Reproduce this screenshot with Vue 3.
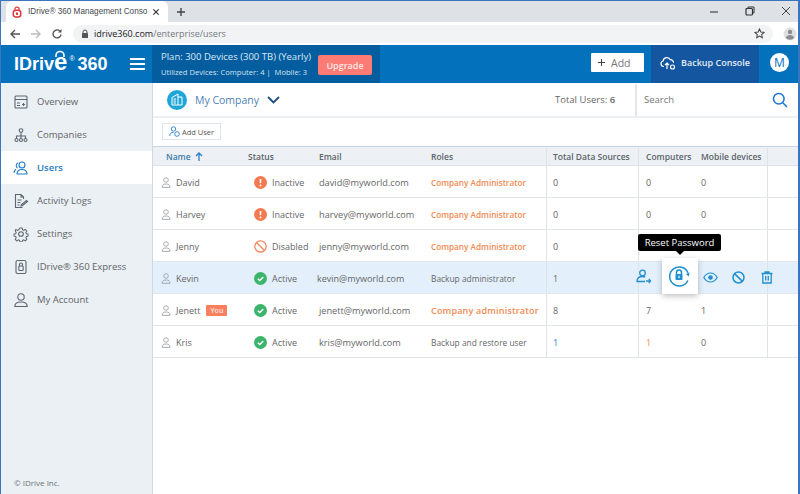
<script setup>
const navItems = [
  { label: 'Overview', icon: 'overview' },
  { label: 'Companies', icon: 'companies' },
  { label: 'Users', icon: 'users', active: true },
  { label: 'Activity Logs', icon: 'logs' },
  { label: 'Settings', icon: 'settings' },
  { label: 'IDrive® 360 Express', icon: 'express' },
  { label: 'My Account', icon: 'account' },
]

// jenny's device counts sit under the tooltip, so they are left empty
const users = [
  { name: 'David', status: 'Inactive', email: 'david@myworld.com', role: 'Company Administrator', admin: true, total: '0', computers: '0', mobile: '0' },
  { name: 'Harvey', status: 'Inactive', email: 'harvey@myworld.com', role: 'Company Administrator', admin: true, total: '0', computers: '0', mobile: '0' },
  { name: 'Jenny', status: 'Disabled', email: 'jenny@myworld.com', role: 'Company Administrator', admin: true, total: '0', computers: '', mobile: '' },
  { name: 'Kevin', status: 'Active', email: 'kevin@myworld.com', role: 'Backup administrator', total: '1', computers: '', mobile: '', hover: true },
  { name: 'Jenett', status: 'Active', email: 'jenett@myworld.com', role: 'Company administrator', admin: true, strong: true, you: true, total: '8', computers: '7', mobile: '1' },
  { name: 'Kris', status: 'Active', email: 'kris@myworld.com', role: 'Backup and restore user', total: '1', computers: '1', mobile: '0', link: true },
]
</script>

<template>
  <div class="window">
    <div class="tabstrip">
      <div class="tab">
        <svg class="favicon" width="10" height="12" viewBox="0 0 12 14">
          <path d="M3.5 5V3.6a2.5 2.5 0 0 1 5 0V5" fill="none" stroke="#e0393e" stroke-width="1.5" />
          <rect x="1.5" y="5" width="9" height="8" rx="3" fill="none" stroke="#e0393e" stroke-width="1.8" />
          <rect x="4.8" y="7.5" width="2.4" height="3" fill="#e0393e" />
        </svg>
        <span class="tab-title">IDrive® 360 Management Conso</span>
        <svg class="tab-close" width="8" height="8" viewBox="0 0 9 9"><path d="M1.5 1.5l6 6M7.500 1.500l-6 6" stroke="#333" stroke-width="1.300" /></svg>
      </div>
      <svg class="newtab" width="10" height="10" viewBox="0 0 10 10"><path d="M5 1v8M1 5h8" stroke="#444" stroke-width="1.400" /></svg>
      <div class="winctl">
        <svg width="10" height="10" viewBox="0 0 10 10"><path d="M1 6h8" stroke="#444" stroke-width="1.200" /></svg>
        <svg width="10" height="10" viewBox="0 0 10 10"><rect x="1" y="2.500" width="6.500" height="6.500" rx="1" fill="none" stroke="#333" stroke-width="1.200" /><path d="M3 2.500V1h6v6H7.500" fill="none" stroke="#333" stroke-width="1" /></svg>
        <svg width="10" height="10" viewBox="0 0 10 10"><path d="M1 1l8 8M9 1l-8 8" stroke="#444" stroke-width="1" /></svg>
      </div>
    </div>

    <div class="addressbar">
      <svg width="12" height="12" viewBox="0 0 12 12"><path d="M11 6H2M6 2L2 6l4 4" fill="none" stroke="#555" stroke-width="1.400" /></svg>
      <svg width="12" height="12" viewBox="0 0 12 12"><path d="M1 6h9M6 2l4 4-4 4" fill="none" stroke="#bbb" stroke-width="1.400" /></svg>
      <svg width="12" height="12" viewBox="0 0 12 12"><path d="M10 6.500A4 4 0 1 1 8.800 3" fill="none" stroke="#555" stroke-width="1.400" /><path d="M10.500 1v3.500H7z" fill="#555" /></svg>
      <div class="urlpill">
        <svg width="8" height="10" viewBox="0 0 8 10"><path d="M2 4V3a2 2 0 0 1 4 0v1" fill="none" stroke="#555" /><rect x="1" y="4" width="6" height="5" rx=".5" fill="#555" /></svg>
        <span class="url"><span class="url-host">idrive360.com</span>/enterprise/users</span>
        <svg class="star" width="11" height="11" viewBox="0 0 12 12"><path d="M6 1l1.500 3.300 3.500.4-2.600 2.400.7 3.600L6 8.900l-3.100 1.800.7-3.600L1 4.700l3.500-.4z" fill="none" stroke="#444" stroke-width="1.100" /></svg>
      </div>
      <svg width="14" height="14" viewBox="0 0 14 14"><circle cx="7" cy="7" r="6.500" fill="#dfe1e5" /><circle cx="7" cy="5" r="2.200" fill="#8a8d91" /><path d="M2.800 11c.6-2.200 2.300-3 4.200-3s3.600.8 4.200 3a6 6 0 0 1-8.400 0z" fill="#8a8d91" /></svg>
    </div>

    <header class="topbar">
      <div class="logo">
        <span class="logo-name">IDriv</span><span class="logo-e">e</span>
        <svg class="logo-lock" width="12" height="7" viewBox="0 0 12 7"><path d="M2 7V5.500a4 4 0 0 1 8 0V7" fill="none" stroke="#fff" stroke-width="1.600" /></svg>
        <span class="logo-reg">®</span>
        <span class="logo-num">360</span>
      </div>
      <div class="burger"><i></i><i></i><i></i></div>
      <div class="plan">
        <div class="plan-text">
          <div class="plan-title">Plan: 300 Devices (300 TB) (Yearly)</div>
          <div class="plan-sub">Utilized Devices: Computer: 4 |&nbsp; Mobile: 3</div>
        </div>
        <button class="upgrade">Upgrade</button>
      </div>
      <button class="add">
        <svg width="9" height="9" viewBox="0 0 10 10"><path d="M5 1v8M1 5h8" stroke="#444" stroke-width="1.200" /></svg>
        Add
      </button>
      <div class="console">
        <svg width="16" height="14" viewBox="0 0 16 14"><path d="M4 10.500H3.500a2.800 2.800 0 0 1-.4-5.500 3.800 3.800 0 0 1 7.200-1.300 3 3 0 0 1 3.200 3" fill="none" stroke="#fff" stroke-width="1.200" /><path d="M7 13V7M5 9l2-2 2 2" fill="none" stroke="#fff" stroke-width="1.200" /><circle cx="12.500" cy="11" r="2" fill="none" stroke="#fff" stroke-width="1.200" /></svg>
        Backup Console
      </div>
      <div class="avatar">M</div>
    </header>

    <div class="body">
      <aside class="sidebar">
        <nav class="nav">
          <a v-for="item in navItems" :key="item.label" class="nav-item" :class="{ active: item.active }">
            <svg class="nav-icon" width="16" height="16" viewBox="0 0 16 16" fill="none" stroke="currentColor" stroke-width="1.100">
              <template v-if="item.icon === 'overview'">
                <rect x="2" y="2" width="12" height="12" rx="1" />
                <path d="M2 5.500h12M4 9h3M4 11.500h3M9 10.500h3M10.500 9v3" />
              </template>
              <template v-else-if="item.icon === 'companies'">
                <circle cx="8" cy="3.500" r="1.800" />
                <path d="M8 5.300V9M3.500 11.500V9h9v2.500M8 9v2.500" />
                <circle cx="3.500" cy="13" r="1.500" />
                <circle cx="8" cy="13" r="1.500" />
                <circle cx="12.500" cy="13" r="1.500" />
              </template>
              <template v-else-if="item.icon === 'users'">
                <circle cx="9" cy="5" r="3" />
                <path d="M4 14c0-3 2-4.500 5-4.500s5 1.500 5 4.500zM5 2.800A3 3 0 0 0 4.500 8M1 13c0-2 .6-3 2-3.800" />
              </template>
              <template v-else-if="item.icon === 'logs'">
                <path d="M10.500 6V4L8 1.500H2.500v13h7M8 1.500V4h2.500M4.500 7h4M4.500 9.500h3M4.500 12h2" />
                <path d="M9.500 12.500l5-4-1-1-5 4-.5 1.500z" />
              </template>
              <template v-else-if="item.icon === 'settings'">
                <circle cx="8" cy="8" r="2.300" />
                <path d="M6.800 1.500h2.400l.4 1.900 1.300.6 1.700-1 1.600 1.700-1 1.600.6 1.300 1.700.3v2.400l-1.700.4-.6 1.300 1 1.700-1.600 1.600-1.700-1-1.300.6-.4 1.700H6.800l-.4-1.700-1.300-.6-1.700 1-1.600-1.600 1-1.700-.6-1.300-1.700-.4V7.900l1.700-.3.600-1.300-1-1.600L2.400 3l1.700 1 1.300-.6z" transform="translate(.6 .6) scale(.93)" />
              </template>
              <template v-else-if="item.icon === 'express'">
                <rect x="3" y="1.500" width="10" height="13" rx="1.500" />
                <rect x="5.800" y="7" width="4.400" height="4.500" rx="1" />
                <path d="M6.500 7V5.500a1.500 1.500 0 0 1 3 0V7" />
              </template>
              <template v-else>
                <circle cx="8" cy="5" r="3.200" />
                <path d="M1.800 14.500c0-3 2.200-4.500 6.200-4.500s6.200 1.500 6.200 4.500z" />
              </template>
            </svg>
            <span>{{ item.label }}</span>
          </a>
        </nav>
        <div class="copyright">© IDrive Inc.</div>
      </aside>

      <main class="content">
        <div class="company-bar">
          <div class="company">
            <span class="company-icon">
              <svg width="12" height="13" viewBox="0 0 12 13" fill="none" stroke="#fff" stroke-width="1"><path d="M1 4.500L7 1v11H1zM7 4h4v8H7M2.500 6H5M2.500 8H5M2.500 10H5" /></svg>
            </span>
            <span class="company-name">My Company</span>
            <svg width="13" height="8" viewBox="0 0 13 8"><path d="M1 1l5.500 5.500L12 1" fill="none" stroke="#1d4f80" stroke-width="1.800" /></svg>
          </div>
          <div class="total">Total Users: <b>6</b></div>
          <div class="search">
            <span>Search</span>
            <svg width="16" height="16" viewBox="0 0 16 16"><circle cx="6.800" cy="6.800" r="5.300" fill="none" stroke="#1a73d8" stroke-width="1.500" /><path d="M10.800 10.800l4.200 4.200" stroke="#1a73d8" stroke-width="1.500" /></svg>
          </div>
        </div>

        <div class="toolbar">
          <button class="add-user">
            <svg width="11" height="11" viewBox="0 0 11 11" fill="none" stroke="#2b7fc4" stroke-width=".9"><circle cx="4.500" cy="3" r="2.200" /><path d="M.8 10c0-2.500 1.500-3.700 3.700-3.700" /><circle cx="8" cy="8" r="2.300" /></svg>
            Add User
          </button>
        </div>

        <div class="table">
          <div class="row head">
            <div class="cell name-head">Name <svg width="8" height="9" viewBox="0 0 8 9"><path d="M4 9V1M1 4l3-3 3 3" fill="none" stroke="#2b7fc4" stroke-width="1.300" /></svg></div>
            <div class="cell">Status</div>
            <div class="cell">Email</div>
            <div class="cell">Roles</div>
            <div class="cell ruled">Total Data Sources</div>
            <div class="cell ruled">Computers</div>
            <div class="cell">Mobile devices</div>
            <div class="cell ruled"></div>
          </div>

          <div v-for="user in users" :key="user.name" class="row" :class="{ hover: user.hover }">
            <div class="cell name">
              <svg width="10" height="11" viewBox="0 0 10 11" fill="none" stroke="#9aa3ab" stroke-width=".9"><circle cx="5" cy="3" r="2.300" /><path d="M1 10.300c0-2.400 1.500-3.300 4-3.300s4 .9 4 3.300z" /></svg>
              <span>{{ user.name }}</span>
              <span v-if="user.you" class="you">You</span>
            </div>
            <div class="cell status">
              <svg v-if="user.status === 'Inactive'" width="13" height="13" viewBox="0 0 13 13"><circle cx="6.500" cy="6.500" r="6.500" fill="#f4794f" /><path d="M6.500 3v4.200" stroke="#fff" stroke-width="1.600" /><circle cx="6.500" cy="9.400" r="1" fill="#fff" /></svg>
              <svg v-else-if="user.status === 'Disabled'" width="13" height="13" viewBox="0 0 13 13" fill="none" stroke="#f4845f" stroke-width="1.200"><circle cx="6.500" cy="6.500" r="5.700" /><path d="M2.500 2.500l8 8" /></svg>
              <svg v-else width="13" height="13" viewBox="0 0 13 13"><circle cx="6.500" cy="6.500" r="6.500" fill="#3cb56c" /><path d="M3.800 6.700l2 1.900 3.500-3.700" fill="none" stroke="#fff" stroke-width="1.400" /></svg>
              <span>{{ user.status }}</span>
            </div>
            <div class="cell email">{{ user.email }}</div>
            <div class="cell role" :class="{ admin: user.admin, strong: user.strong }">{{ user.role }}</div>
            <div class="cell ruled" :class="{ blue: user.link }">{{ user.total }}</div>
            <div class="cell ruled" :class="{ orange: user.link }">{{ user.computers }}</div>
            <div class="cell">{{ user.mobile }}</div>
            <div class="cell ruled"></div>

            <div v-if="user.hover" class="actions">
              <svg class="act-user" width="15" height="15" viewBox="0 0 15 15" fill="none" stroke="#1f8fd0" stroke-width="1.300"><circle cx="6.500" cy="4" r="2.800" /><path d="M9 12.500H1c0-3.300 2-5 5.500-5 1 0 2 .2 2.700.6M10 12h4.500M12.800 10l1.800 2-1.800 2" /></svg>
              <div class="reset-box">
                <svg width="24" height="22" viewBox="0 0 24 22" fill="none" stroke="#1f8fd0" stroke-width="1.500"><path d="M20.500 11a9.500 9.500 0 1 0-2.700 7.200" transform="rotate(-20 11 11)" /><path d="M21.600 7.500l-.8 4-3-2.400z" fill="#1f8fd0" stroke="none" /><path d="M8.500 9V7.500a2.500 2.500 0 0 1 5 0V9" /><rect x="7.500" y="9" width="7" height="6" rx=".8" fill="#1f8fd0" stroke="none" /><rect x="10.400" y="10.800" width="1.200" height="2.400" fill="#fff" stroke="none" /></svg>
                <div class="tooltip">Reset Password</div>
              </div>
              <svg class="act-eye" width="15" height="11" viewBox="0 0 15 11" fill="none" stroke="#1f8fd0" stroke-width="1.200"><path d="M.8 5.500C2.500 2.500 4.800 1 7.500 1s5 1.500 6.700 4.500C12.500 8.500 10.200 10 7.500 10S2.500 8.500.8 5.500z" /><circle cx="7.500" cy="5.500" r="2.300" fill="#1f8fd0" stroke="none" /></svg>
              <svg class="act-ban" width="13" height="13" viewBox="0 0 13 13" fill="none" stroke="#1f8fd0" stroke-width="1.500"><circle cx="6.500" cy="6.500" r="5.500" /><path d="M2.600 2.600l7.800 7.800" /></svg>
              <svg class="act-trash" width="12" height="13" viewBox="0 0 12 13" fill="none" stroke="#1f8fd0" stroke-width="1.300"><path d="M.5 2.500h11M4 2.500V1h4v1.500M1.800 2.500V12h8.400V2.500M4.700 5v4.500M7.300 5v4.500" /></svg>
            </div>
          </div>
        </div>
      </main>
    </div>
  </div>
</template>

<style scoped>
.window {
  width: 800px;
  height: 494px;
  box-sizing: border-box;
  border: 1px solid #3a75bd;
  border-bottom: 0;
  border-right-width: 2px;
  display: flex;
  flex-direction: column;
  overflow: hidden;
  background: #fff;
  font-family: "Open Sans", "Noto Sans", sans-serif;
  color: #555b62;
}

.tabstrip {
  height: 21px;
  flex: none;
  display: flex;
  align-items: center;
  background: #dee1e6;
}
.tab {
  width: 162px;
  height: 21px;
  margin-left: 5px;
  box-sizing: border-box;
  padding: 0 8px 0 6px;
  display: flex;
  align-items: center;
  background: #fff;
  border-radius: 6px 6px 0 0;
}
.favicon {
  flex: none;
  margin-right: 6px;
}
.tab-close {
  flex: none;
  margin-left: 8px;
}
.tab-title {
  flex: 1;
  min-width: 0;
  font-family: "Liberation Sans", sans-serif;
  font-size: 8.200px;
  color: #45494e;
  white-space: nowrap;
}
.newtab {
  margin-left: 8px;
}
.winctl {
  margin-left: auto;
  margin-right: 7px;
  margin-bottom: 2px;
  display: flex;
  gap: 26px;
}

.addressbar {
  height: 23px;
  flex: none;
  display: flex;
  align-items: center;
  padding-left: 8px;
  gap: 9px;
  background: #fff;
}
.urlpill {
  width: 700px;
  height: 18px;
  margin: 0 1px;
  box-sizing: border-box;
  padding: 0 8px;
  display: flex;
  align-items: center;
  gap: 5px;
  border-radius: 9px;
  background: #f1f3f4;
}
.url {
  font-size: 9px;
  color: #767a7e;
}
.url-host {
  color: #202124;
}
.star {
  margin-left: auto;
}

.topbar {
  height: 38px;
  flex: none;
  display: flex;
  align-items: center;
  background: #0471bd;
  color: #fff;
}
.logo {
  width: 116px;
  margin: 0 0 2px 13px;
  position: relative;
  display: flex;
  align-items: baseline;
  font-family: "Liberation Sans", sans-serif;
  font-weight: 700;
  white-space: nowrap;
}
.logo-name {
  font-size: 18px;
}
.logo-e {
  font-size: 24px;
  line-height: 22px;
}
.logo-lock {
  position: absolute;
  left: 40px;
  top: -1px;
}
.logo-reg {
  font-size: 7px;
  font-weight: 400;
  margin: 0 3px 0 2px;
  align-self: flex-start;
  padding-top: 4px;
}
.logo-num {
  font-size: 18px;
}
.burger {
  width: 15px;
  display: flex;
  flex-direction: column;
  gap: 3px;
}
.burger i {
  display: block;
  height: 2px;
  background: #fff;
}
.plan {
  width: 228px;
  height: 38px;
  margin-left: 7px;
  box-sizing: border-box;
  padding-left: 9px;
  display: flex;
  align-items: center;
  gap: 6px;
  background: #045d9f;
  white-space: nowrap;
}
.plan-text {
  width: 151px;
}
.plan-title {
  font-size: 9.500px;
  line-height: 14px;
  color: #dbe9f5;
}
.plan-sub {
  font-size: 7.600px;
  line-height: 13px;
  margin-top: 2px;
  color: #d3e3f1;
}
.upgrade {
  width: 54px;
  height: 20px;
  margin-top: 2px;
  padding: 0;
  border: 0;
  border-radius: 2px;
  background: #fc7b74;
  color: #fbe9e6;
  font: 600 9px "Open Sans", sans-serif;
}
.add {
  width: 53px;
  height: 19px;
  margin-left: auto;
  margin-bottom: 3px;
  padding: 0 0 0 6px;
  border: 0;
  border-radius: 1px;
  background: #fff;
  color: #777;
  display: flex;
  align-items: center;
  gap: 5px;
  font: 400 10.500px "Open Sans", sans-serif;
}
.console {
  width: 108px;
  height: 38px;
  margin-left: 7px;
  box-sizing: border-box;
  padding-bottom: 3px;
  display: flex;
  align-items: center;
  justify-content: center;
  gap: 5px;
  background: #1457a0;
  font-size: 9px;
  font-weight: 600;
  color: #e2ecf6;
}
.avatar {
  width: 19px;
  height: 19px;
  margin: 0 9px 3px 11px;
  border-radius: 50%;
  background: #fff;
  color: #0471bd;
  display: flex;
  align-items: center;
  justify-content: center;
  font-size: 12px;
}

.body {
  flex: 1;
  min-height: 0;
  display: flex;
}
.sidebar {
  width: 152px;
  flex: none;
  box-sizing: border-box;
  border-right: 1px solid #cfd8e0;
  background: #ebf0f4;
  display: flex;
  flex-direction: column;
}
.nav {
  padding-top: 2px;
}
.nav-item {
  height: 33px;
  padding-left: 12px;
  display: flex;
  align-items: center;
  gap: 8px;
  font-size: 9.500px;
  color: #5f6468;
}
.nav-icon {
  flex: none;
  color: #5d6670;
}
.nav-item.active {
  background: #fff;
  color: #2b7fc4;
  font-weight: 600;
}
.nav-item.active .nav-icon {
  color: #1f7ac8;
}
.copyright {
  margin-top: auto;
  padding: 0 0 6px 13px;
  font-size: 8px;
  color: #6b7075;
}

.content {
  flex: 1;
  min-width: 0;
}
.company-bar {
  height: 35px;
  box-sizing: border-box;
  border-bottom: 2px solid #eef1f4;
  display: flex;
  align-items: center;
}
.company {
  padding-left: 14px;
  width: 402px;
  box-sizing: border-box;
  display: flex;
  align-items: center;
  gap: 8px;
}
.company-icon {
  width: 20px;
  height: 20px;
  border-radius: 50%;
  background: #1fa5d8;
  display: flex;
  align-items: center;
  justify-content: center;
}
.company-name {
  font-size: 10.500px;
  color: #4f7fb5;
}
.total {
  width: 80px;
  font-size: 9.500px;
  color: #666;
}
.total b {
  font-weight: 600;
}
.search {
  flex: 1;
  height: 32px;
  box-sizing: border-box;
  border-left: 2px solid #e3e8ed;
  padding: 0 10px 0 7px;
  display: flex;
  align-items: center;
  justify-content: space-between;
  font-size: 9.500px;
  color: #777;
}

.toolbar {
  height: 28px;
  box-sizing: border-box;
  padding: 5px 0 0 9px;
}
.add-user {
  width: 59px;
  height: 17px;
  padding: 0;
  border: 1px solid #dfe4e8;
  background: #fff;
  display: flex;
  align-items: center;
  justify-content: center;
  gap: 2px;
  font: 400 7.500px "Open Sans", sans-serif;
  color: #555;
}

.row {
  height: 32px;
  box-sizing: border-box;
  position: relative;
  display: grid;
  grid-template-columns: 95px 71px 112px 115px 92px 55px 74px 1fr;
  border-bottom: 1px solid #e4e7ea;
  font-size: 9px;
  color: #666;
}
.row:not(.head) .cell {
  padding-top: 2px;
}
.row.head {
  height: 20px;
  border-top: 1px solid #c6d5e3;
  border-bottom: 1px solid #dde3e9;
  padding-top: 1px;
  background: #edf1f5;
  font-size: 8.500px;
  font-weight: 600;
  color: #5c6369;
}
.row.hover {
  background: #e3f0fc;
}
.cell {
  display: flex;
  align-items: center;
  white-space: nowrap;
  box-sizing: border-box;
}
.ruled {
  border-left: 1px solid #dfe3e7;
  padding-left: 6px;
}
.ruled + .ruled {
  padding-left: 7px;
}
.ruled + .cell:not(.ruled) {
  padding-left: 8px;
}
.name-head {
  padding-left: 13px;
  gap: 4px;
  color: #3f79ad;
}
.name {
  padding-left: 8px;
  gap: 5px;
}
.status {
  padding-left: 6px;
  gap: 5px;
}
.email {
  font-size: 9.200px;
}
.hover .email {
  font-size: 9px;
  margin-left: -2px;
}
.role {
  font-size: 8.400px;
}
.you {
  margin-left: 1px;
  padding: 0 4px;
  height: 11px;
  line-height: 11px;
  border-radius: 1px;
  background: #fb7f5e;
  color: #fdeae4;
  font-size: 7px;
  font-weight: 600;
}
.role.admin {
  color: #ef8a52;
  font-weight: 600;
  font-size: 8.200px;
}
.role.strong {
  font-size: 9px;
  letter-spacing: .2px;
}
.blue {
  color: #2b7fc4;
}
.orange {
  color: #ef8a52;
}

.actions {
  position: absolute;
  top: 0;
  left: 483px;
  height: 31px;
}
.actions > svg {
  position: absolute;
}
.act-user {
  left: 0;
  top: 7px;
}
.act-eye {
  left: 67px;
  top: 10px;
}
.act-ban {
  left: 96px;
  top: 9px;
}
.act-trash {
  left: 125px;
  top: 9px;
}
.reset-box {
  position: absolute;
  left: 26px;
  top: -4px;
  width: 36px;
  height: 36px;
  background: #fff;
  box-shadow: 0 2px 6px rgba(0, 0, 0, .25);
  display: flex;
  align-items: center;
  justify-content: center;
}
.tooltip {
  position: absolute;
  left: -24px;
  top: -24px;
  width: 83px;
  height: 17px;
  border-radius: 2px;
  background: #000;
  color: #fff;
  font-size: 9.500px;
  line-height: 17px;
  text-align: center;
}
.tooltip::after {
  content: "";
  position: absolute;
  left: 38px;
  top: 17px;
  border: 4px solid transparent;
  border-top-color: #000;
}
</style>

<style>
html, body {
  margin: 0;
}
</style>
